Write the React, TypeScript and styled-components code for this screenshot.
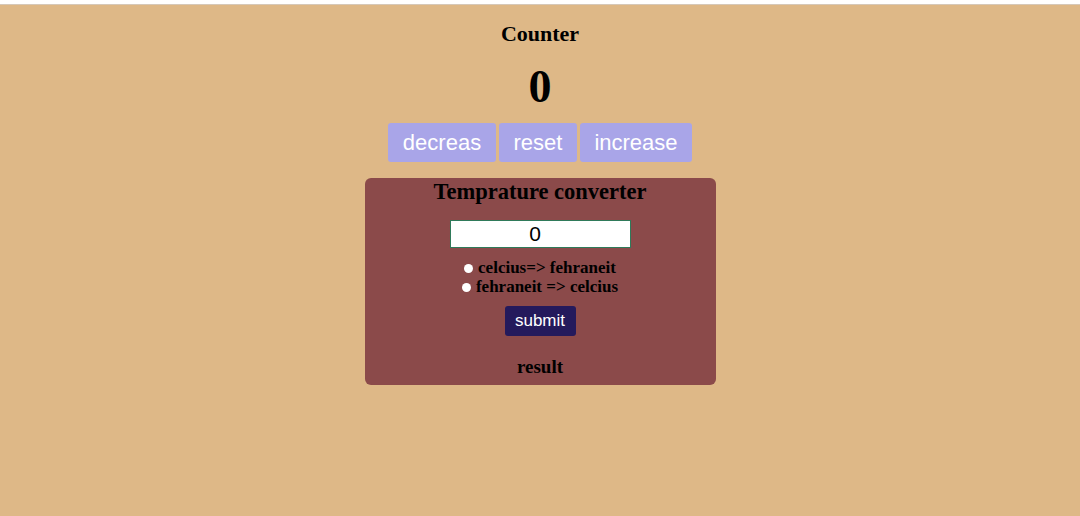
import React, { useState } from "react";
import styled, { createGlobalStyle } from "styled-components";

const Global = createGlobalStyle`
  html, body { margin: 0; padding: 0; background: #ffffff; }
  body { font-family: "Liberation Serif", "Times New Roman", serif; }
`;

const Page = styled.div`
  margin-top: 4px;
  min-height: 512px;
  background: #deb887;
  border-top: 1px solid #d6c8b8;
  display: flex;
  flex-direction: column;
  align-items: center;
  padding-top: 18px;
  box-sizing: border-box;
`;

const Title = styled.h2`
  margin: 0;
  font-size: 22px;
  line-height: 22px;
  font-weight: bold;
  color: #000;
`;

const Count = styled.div`
  margin-top: 19px;
  font-size: 46px;
  line-height: 46px;
  font-weight: bold;
  color: #000;
`;

const ButtonRow = styled.div`
  display: flex;
  gap: 3px;
  margin-top: 13px;
`;

const CounterButton = styled.button<{ $w: number }>`
  width: ${(p) => p.$w}px;
  height: 39px;
  border: none;
  border-radius: 3px;
  background: #a9a5e8;
  color: #ffffff;
  font-family: "Liberation Sans", Arial, sans-serif;
  font-size: 22px;
  padding: 0;
  cursor: pointer;
`;

const Card = styled.div`
  margin-top: 16px;
  width: 351px;
  height: 207px;
  background: #8b4a4a;
  border-radius: 6px;
  display: flex;
  flex-direction: column;
  align-items: center;
  box-sizing: border-box;
  padding-top: 2px;
`;

const CardTitle = styled.h3`
  margin: 0;
  font-size: 22.5px;
  line-height: 24px;
  font-weight: bold;
  color: #000;
`;

const TempInput = styled.input`
  margin-top: 16px;
  width: 181px;
  height: 28px;
  box-sizing: border-box;
  border: 1px solid #2f7a5a;
  background: #ffffff;
  text-align: center;
  font-family: "Liberation Sans", Arial, sans-serif;
  font-size: 21px;
  color: #000;
  padding: 0 10px 0 0;
  outline: none;
`;

const RadioGroup = styled.div`
  margin-top: 11px;
  display: flex;
  flex-direction: column;
  align-items: center;
  gap: 1px;
`;

const RadioLabel = styled.label`
  display: flex;
  align-items: center;
  gap: 5px;
  font-size: 17px;
  line-height: 18px;
  font-weight: bold;
  color: #000;
`;

const Dot = styled.span`
  width: 9px;
  height: 9px;
  border-radius: 50%;
  background: #ffffff;
  display: inline-block;
`;

const Submit = styled.button`
  margin-top: 10px;
  width: 71px;
  height: 30px;
  border: none;
  border-radius: 3px;
  background: #241a5c;
  color: #ffffff;
  font-family: "Liberation Sans", Arial, sans-serif;
  font-size: 17px;
  padding: 0;
`;

const Result = styled.div`
  margin-top: 20px;
  font-size: 19px;
  font-weight: bold;
  color: #000;
`;

export default function App() {
  const [count, setCount] = useState(0);
  return (
    <>
      <Global />
      <Page>
        <Title>Counter</Title>
        <Count>{count}</Count>
        <ButtonRow>
          <CounterButton $w={108} onClick={() => setCount(count - 1)}>decreas</CounterButton>
          <CounterButton $w={78} onClick={() => setCount(0)}>reset</CounterButton>
          <CounterButton $w={112} onClick={() => setCount(count + 1)}>increase</CounterButton>
        </ButtonRow>
        <Card>
          <CardTitle>Temprature converter</CardTitle>
          <TempInput defaultValue="0" />
          <RadioGroup>
            <RadioLabel><Dot />celcius=&gt; fehraneit</RadioLabel>
            <RadioLabel><Dot />fehraneit =&gt; celcius</RadioLabel>
          </RadioGroup>
          <Submit>submit</Submit>
          <Result>result</Result>
        </Card>
      </Page>
    </>
  );
}
